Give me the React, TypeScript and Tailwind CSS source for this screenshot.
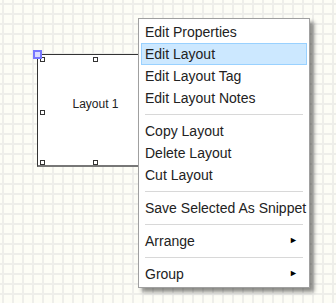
import { Fragment } from 'react';

type Item = { label: string; sub?: boolean; active?: boolean } | 'sep';

const items: Item[] = [
  { label: 'Edit Properties' },
  { label: 'Edit Layout', active: true },
  { label: 'Edit Layout Tag' },
  { label: 'Edit Layout Notes' },
  'sep',
  { label: 'Copy Layout' },
  { label: 'Delete Layout' },
  { label: 'Cut Layout' },
  'sep',
  { label: 'Save Selected As Snippet' },
  'sep',
  { label: 'Arrange', sub: true },
  'sep',
  { label: 'Group', sub: true },
];

// small resize handle on the selected shape
const Handle = ({ x, y }: { x: number; y: number }) => (
  <div
    className="absolute w-[5px] h-[5px] border border-[#333] bg-white"
    style={{ left: x, top: y }}
  />
);

const App = () => {
  return (
    <div className="relative w-[336px] h-[303px] overflow-hidden bg-[#fdfdf6] bg-[linear-gradient(to_right,#eeeeea_2px,transparent_2px),linear-gradient(to_bottom,#eeeeea_2px,transparent_2px)] bg-[size:10px_10px] bg-[position:2px_3px] font-['Liberation_Sans',Arial,sans-serif]">
      {/* layout shape */}
      <div className="absolute left-[37px] top-[54px] w-[117px] h-[113px] bg-white border border-[#333] border-b-2 border-b-[#777] flex items-center justify-center">
        <span className="text-[12px] text-[#222] -mt-[12px]">Layout 1</span>
        <Handle x={2} y={2} />
        <Handle x={55} y={2} />
        <Handle x={2} y={55} />
        <Handle x={2} y={105} />
        <Handle x={55} y={105} />
        <div className="absolute -left-[5px] -top-[5px] w-[9px] h-[9px] border-2 border-[#7878ff] bg-[#dcdcff]" />
      </div>

      {/* context menu */}
      <div className="absolute left-[138px] top-[18px] w-[172px] bg-white border border-[#a0a0a0] shadow-[4px_4px_4px_rgba(0,0,0,0.45)] p-[2px] text-[14px] text-[#222] whitespace-nowrap">
        {items.map((it, i) => (
          <Fragment key={i}>
            {it === 'sep' ? (
              <div className="h-[11px] flex items-center px-[4px]">
                <div className="h-px w-full bg-[#d8d8d8]" />
              </div>
            ) : (
              <div
                className={`h-[22px] flex items-center justify-between pl-[3px] pr-[8px] border ${
                  it.active ? 'bg-[#cce8ff] border-[#99d1ff]' : 'border-transparent'
                }`}
              >
                <span>{it.label}</span>
                {it.sub && <span className="text-[9px] text-black">►</span>}
              </div>
            )}
          </Fragment>
        ))}
      </div>
    </div>
  );
};

export default App;
